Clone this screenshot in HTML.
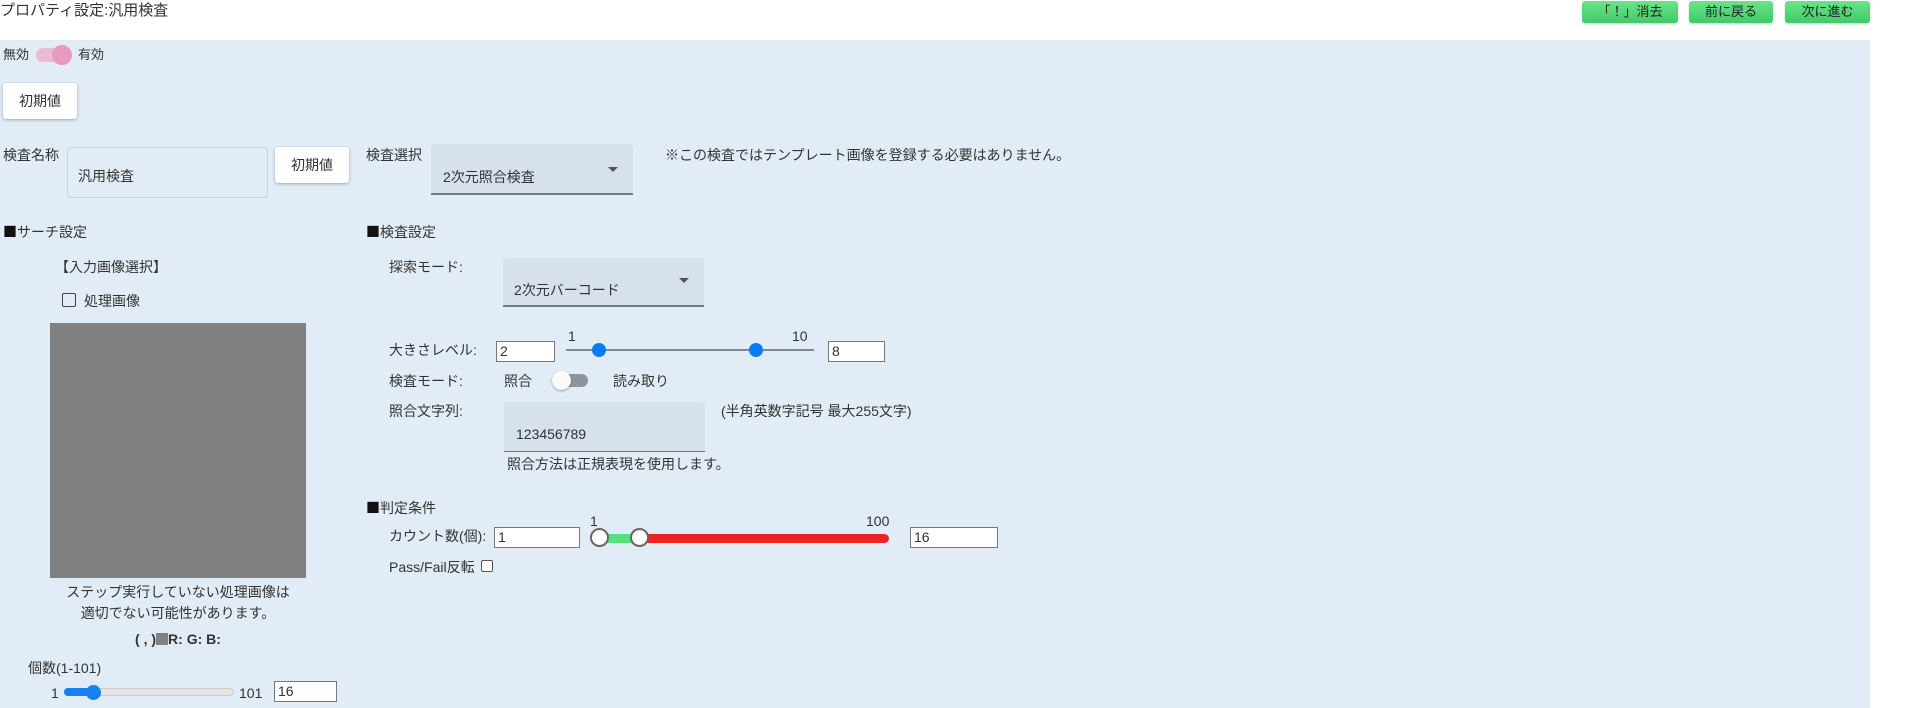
<!DOCTYPE html>
<html><head><meta charset="utf-8"><style>
*{box-sizing:border-box;margin:0;padding:0}
body{width:1920px;height:708px;overflow:hidden;background:#fff;font-family:"Liberation Sans","Noto Sans CJK JP",sans-serif;font-size:14px;color:#333;position:relative}
.a{position:absolute;white-space:nowrap;line-height:16px}
.sq{font-family:"Noto Sans CJK JP",sans-serif;color:#111}
.bg{position:absolute;left:0;top:40px;width:1870px;height:668px;background:#e2ecf6}
.gb{position:absolute;top:1px;height:22px;background:linear-gradient(#6be38a,#3fcb68);border-radius:3px;box-shadow:0 1px 2px rgba(0,0,0,.2);text-align:center;line-height:22px;font-size:13px;color:#222}
.wb{position:absolute;background:#fff;border-radius:3px;box-shadow:0 1px 3px rgba(0,0,0,.3);text-align:center;font-size:14px}
.in{position:absolute;background:#fff;border:1px solid #777;font-size:14px;padding-left:3px;line-height:19px}
.sel{position:absolute;background:#d6e1ec;border-bottom:2px solid #6b7d8d;border-radius:3px 3px 0 0}
.arr{position:absolute;width:0;height:0;border-left:5px solid transparent;border-right:5px solid transparent;border-top:5px solid #555}
</style></head><body>
<div class="a" style="left:0;top:3px;font-size:15px">プロパティ設定:汎用検査</div>
<div class="gb" style="left:1582px;width:96px">「！」消去</div>
<div class="gb" style="left:1689px;width:84px">前に戻る</div>
<div class="gb" style="left:1785px;width:85px">次に進む</div>
<div class="bg"></div>
<div class="a" style="left:3px;top:47px;font-size:13px">無効</div>
<div style="position:absolute;left:36px;top:48px;width:34px;height:14px;border-radius:7px;background:#e9bcd2"></div>
<div style="position:absolute;left:52px;top:45px;width:20px;height:20px;border-radius:50%;background:#e89bbf"></div>
<div class="a" style="left:78px;top:47px;font-size:13px">有効</div>
<div class="wb" style="left:3px;top:83px;width:74px;height:36px;line-height:36px">初期値</div>
<div class="a" style="left:3px;top:147px">検査名称</div>
<div style="position:absolute;left:67px;top:147px;width:201px;height:51px;border:1px solid #c5d1dd;border-radius:4px;background:#e2ecf6"></div>
<div class="a" style="left:78px;top:168px">汎用検査</div>
<div class="wb" style="left:275px;top:147px;width:74px;height:36px;line-height:36px">初期値</div>
<div class="a" style="left:366px;top:147px">検査選択</div>
<div class="sel" style="left:431px;top:144px;width:202px;height:51px"></div>
<div class="a" style="left:443px;top:169px">2次元照合検査</div>
<div class="arr" style="left:608px;top:167px"></div>
<div class="a" style="left:665px;top:147px">※この検査ではテンプレート画像を登録する必要はありません。</div>
<div class="a" style="left:3px;top:224px"><span class="sq">■</span>サーチ設定</div>
<div class="a" style="left:366px;top:224px"><span class="sq">■</span>検査設定</div>
<div class="a" style="left:55px;top:259px">【入力画像選択】</div>
<div style="position:absolute;left:62px;top:293px;width:14px;height:14px;border:1.5px solid #444;border-radius:2px"></div>
<div class="a" style="left:84px;top:293px">処理画像</div>
<div style="position:absolute;left:50px;top:323px;width:256px;height:255px;background:#808080"></div>
<div class="a" style="left:50px;width:256px;text-align:center;top:584px">ステップ実行していない処理画像は</div>
<div class="a" style="left:50px;width:256px;text-align:center;top:605px">適切でない可能性があります。</div>
<div class="a" style="left:50px;width:256px;text-align:center;top:631px;font-weight:bold;font-size:14px">( , )<span style="display:inline-block;width:12px;height:12px;background:#808080;vertical-align:-1px"></span>R: G: B:</div>
<div class="a" style="left:28px;top:660px">個数(1-101)</div>
<div class="a" style="left:51px;top:685px">1</div>
<div style="position:absolute;left:64px;top:688px;width:170px;height:8px;border-radius:4px;background:#e4e4e4;border:1px solid #ccc"></div>
<div style="position:absolute;left:64px;top:688px;width:30px;height:8px;border-radius:4px;background:#1a7ff0"></div>
<div style="position:absolute;left:86px;top:685px;width:15px;height:15px;border-radius:50%;background:#1a7ff0"></div>
<div class="a" style="left:239px;top:685px">101</div>
<div class="in" style="left:274px;top:681px;width:63px;height:21px">16</div>

<div class="a" style="left:389px;top:259px">探索モード:</div>
<div class="sel" style="left:503px;top:258px;width:201px;height:49px"></div>
<div class="a" style="left:514px;top:282px">2次元バーコード</div>
<div class="arr" style="left:679px;top:278px"></div>
<div class="a" style="left:389px;top:342px">大きさレベル:</div>
<div class="in" style="left:496px;top:341px;width:59px;height:21px">2</div>
<div class="a" style="left:568px;top:328px">1</div>
<div class="a" style="left:792px;top:328px">10</div>
<div style="position:absolute;left:566px;top:349px;width:248px;height:2px;background:#808890"></div>
<div style="position:absolute;left:592px;top:343px;width:14px;height:14px;border-radius:50%;background:#0a7bf4"></div>
<div style="position:absolute;left:749px;top:343px;width:14px;height:14px;border-radius:50%;background:#0a7bf4"></div>
<div class="in" style="left:828px;top:341px;width:57px;height:21px">8</div>
<div class="a" style="left:389px;top:373px">検査モード:</div>
<div class="a" style="left:504px;top:373px">照合</div>
<div style="position:absolute;left:553px;top:374px;width:35px;height:13px;border-radius:7px;background:#8e949b"></div>
<div style="position:absolute;left:552px;top:371px;width:19px;height:19px;border-radius:50%;background:#fafafa;box-shadow:0 1px 2px rgba(0,0,0,.35)"></div>
<div class="a" style="left:613px;top:373px">読み取り</div>
<div class="a" style="left:389px;top:403px">照合文字列:</div>
<div class="sel" style="left:504px;top:402px;width:201px;height:50px;border-bottom:1px solid #777"></div>
<div class="a" style="left:516px;top:426px">123456789</div>
<div class="a" style="left:721px;top:403px">(半角英数字記号 最大255文字)</div>
<div class="a" style="left:507px;top:456px">照合方法は正規表現を使用します。</div>
<div class="a" style="left:366px;top:500px"><span class="sq">■</span>判定条件</div>
<div class="a" style="left:389px;top:528px">カウント数(個):</div>
<div class="in" style="left:494px;top:527px;width:86px;height:21px">1</div>
<div class="a" style="left:590px;top:513px">1</div>
<div class="a" style="left:866px;top:513px">100</div>
<div style="position:absolute;left:600px;top:534px;width:289px;height:9px;border-radius:5px;background:#ef2222"></div>
<div style="position:absolute;left:600px;top:534px;width:40px;height:9px;background:#55e27e"></div>
<div style="position:absolute;left:590px;top:528px;width:19px;height:19px;border-radius:50%;background:#fff;border:2px solid #666"></div>
<div style="position:absolute;left:630px;top:528px;width:19px;height:19px;border-radius:50%;background:#fff;border:2px solid #666"></div>
<div class="in" style="left:910px;top:527px;width:88px;height:21px">16</div>
<div class="a" style="left:389px;top:559px">Pass/Fail反転</div>
<div style="position:absolute;left:481px;top:560px;width:12px;height:12px;border:1px solid #555;border-radius:2px;background:#fff"></div>
</body></html>
